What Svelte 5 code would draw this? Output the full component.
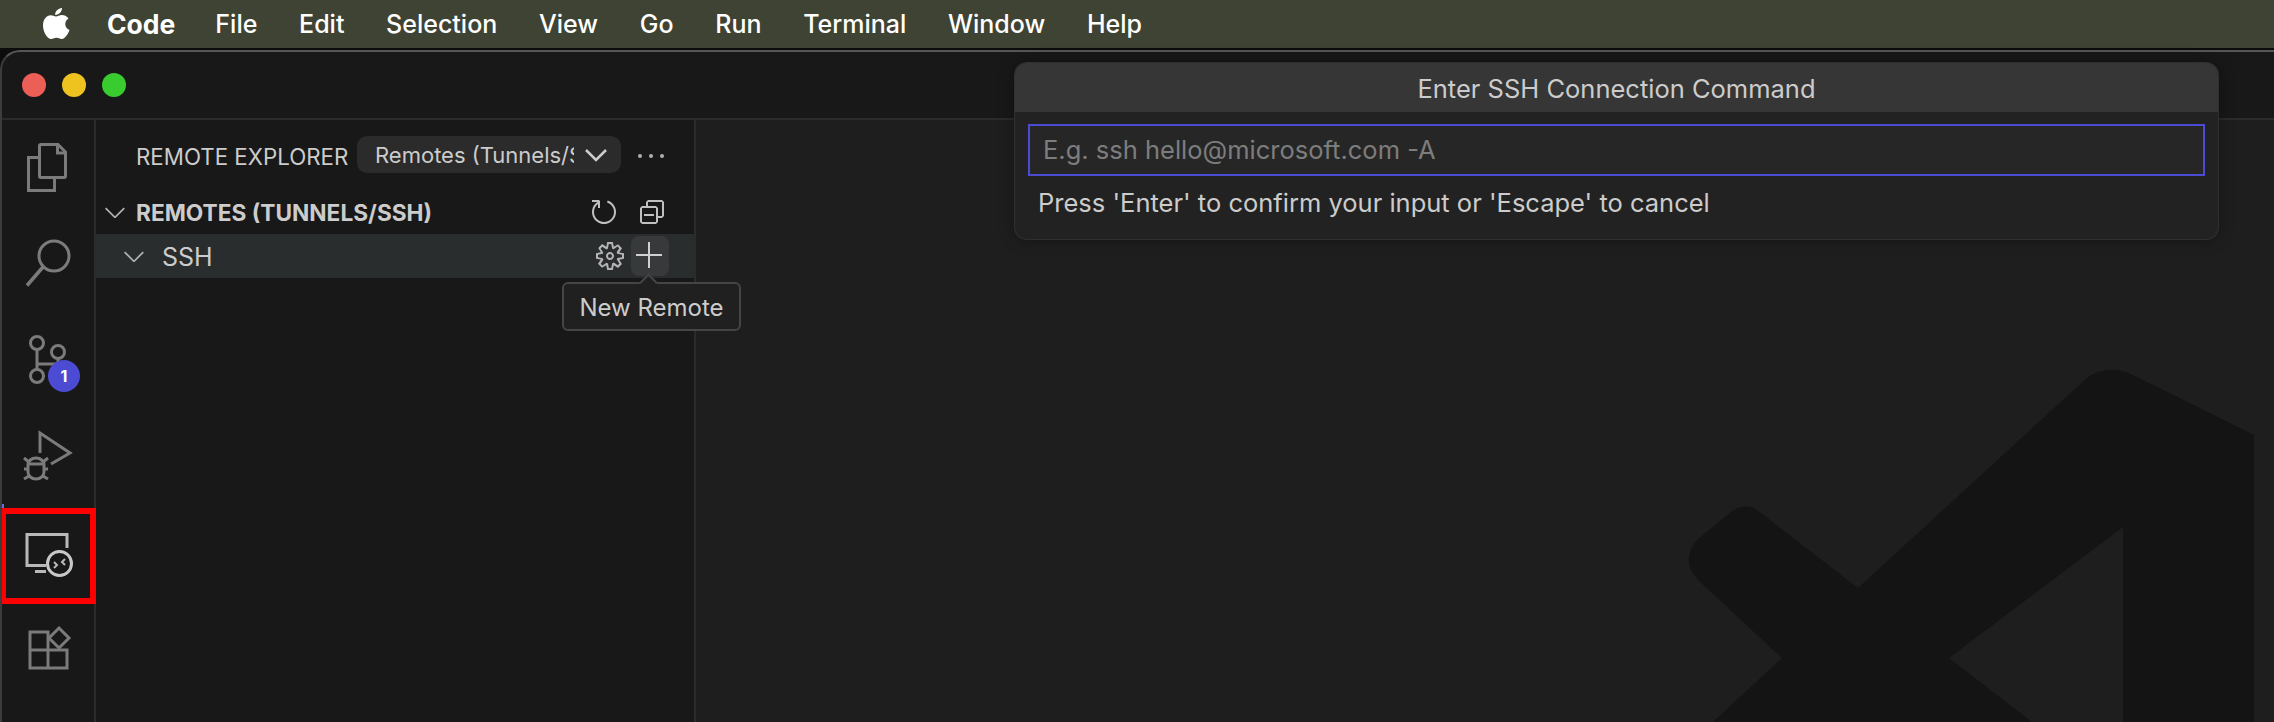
<script>
  const menus = ['File', 'Edit', 'Selection', 'View', 'Go', 'Run', 'Terminal', 'Window', 'Help'];
  const chevronDown = 'M7.976 10.072l4.357-4.357.62.618L8.284 11h-.618L3 6.333l.619-.618 4.357 4.357z';
</script>

<div class="page">
  <div class="menubar">
    <svg class="apple" width="30" height="34" viewBox="0 0 30 34">
      <path d="M21 1c.3 3-2.700 7-6.800 7-.4-3.600 3-6.700 6.800-7zM15 9.500c1.500 0 3.300-1.500 6-1.500 2 0 5 1 6.500 3.600-4.800 3-4 9.500 1 11.400-1.300 3.500-4.500 9-7.500 9-2 0-2.900-1.300-5.500-1.300S12 32 10 32C6.500 32 2 25 2 18.500 2 12 6 8.300 9.500 8.300c2.300 0 4 1.200 5.500 1.200z" fill="#fff"/>
    </svg>
    <span class="app-name">Code</span>
    {#each menus as item}
      <span class="menu-item">{item}</span>
    {/each}
  </div>

  <div class="window">
    <div class="titlebar">
      <span class="light red"></span>
      <span class="light yellow"></span>
      <span class="light green"></span>
    </div>

    <div class="main">
      <div class="activitybar">
        <div class="activity-item">
          <svg width="94" height="96" viewBox="0 0 94 96" fill="none" stroke="#7b7b7b" stroke-width="3">
            <path d="M38 37.500h-9.500v33h26v-12" />
            <path d="M39.500 26c0-1 .5-1.500 1.500-1.500h17l7.500 7.500v24c0 1-.5 1.500-1.500 1.500H41c-1 0-1.500-.5-1.500-1.500z" />
            <path d="M57.500 25v8h8" />
          </svg>
        </div>
        <div class="activity-item">
          <svg width="94" height="96" viewBox="0 0 94 96" fill="none" stroke="#7b7b7b" stroke-width="3">
            <circle cx="54" cy="40" r="15" />
            <path d="M43 51L27 69.500" stroke-width="3.500" />
          </svg>
        </div>
        <div class="activity-item">
          <svg width="94" height="96" viewBox="0 0 94 96" fill="none" stroke="#7b7b7b" stroke-width="3">
            <circle cx="37" cy="31" r="6.500" />
            <circle cx="58" cy="40" r="6.500" />
            <circle cx="37" cy="64" r="6.500" />
            <path d="M37 37.500v20M37 52h21v-5.500" />
          </svg>
          <span class="badge">1</span>
        </div>
        <div class="activity-item">
          <svg width="94" height="96" viewBox="0 0 94 96" fill="none" stroke="#7b7b7b" stroke-width="3">
            <path d="M40 45V25l30 20-19 11" />
            <path d="M28 57c0-4 3.500-7 8-7s8 3 8 7v7c0 4-3.500 7-8 7s-8-3-8-7z" />
            <path d="M29 56h14M24 50l5 4M48 50l-5 4M24 61h5M48 61h-5M24 71l5-3M48 71l-5-3" />
          </svg>
        </div>
        <div class="activity-item active">
          <svg width="94" height="96" viewBox="0 0 94 96" fill="none" stroke="#b9b9b9" stroke-width="3">
            <path d="M67 44V30.500H27v31h19M35 67.500h11" />
            <circle cx="59.500" cy="59.500" r="12" stroke="#c8c8c8" />
            <path d="M54 58l3 3-3 3M65 55l-3 3 3 3" stroke-width="2" />
          </svg>
          <span class="highlight"></span>
        </div>
        <div class="activity-item">
          <svg width="94" height="96" viewBox="0 0 94 96" fill="none" stroke="#7b7b7b" stroke-width="3">
            <path d="M30 32h18v36H30zM30 50h37v18H48" />
            <path d="M59 28l10 10-10 10-10-10z" />
          </svg>
        </div>
      </div>

      <div class="sidebar">
        <div class="sidebar-head">
          <span class="sidebar-title">REMOTE EXPLORER</span>
          <div class="select">
            <span class="select-label">Remotes (Tunnels/SSH)</span>
            <svg width="22" height="14" viewBox="0 0 22 14" fill="none" stroke="#cccccc" stroke-width="2.500">
              <path d="M1 2l10 10L21 2" />
            </svg>
          </div>
          <div class="more"><i></i><i></i><i></i></div>
        </div>

        <div class="section-row">
          <svg class="chevron" width="32" height="32" viewBox="0 0 16 16" fill="#b0b0b0">
            <path d={chevronDown} />
          </svg>
          <span class="section-title">REMOTES (TUNNELS/SSH)</span>
          <div class="row-actions">
            <svg width="32" height="32" viewBox="0 0 16 16" fill="#c0c0c0">
              <path fill-rule="evenodd" clip-rule="evenodd" d="M4.681 3H2V2h3.500l.5.500V6H5V4a5 5 0 1 0 4.530-.761l.302-.954A6 6 0 1 1 4.681 3z" />
            </svg>
            <svg width="32" height="32" viewBox="0 0 16 16" fill="#c0c0c0">
              <path d="M9 9H4v1h5V9z" />
              <path fill-rule="evenodd" clip-rule="evenodd" d="M5 3l1-1h7l1 1v7l-1 1h-2v2l-1 1H3l-1-1V6l1-1h2V3zm1 2h4l1 1v4h2V3H6v2zm4 1H3v7h7V6z" />
            </svg>
          </div>
        </div>

        <div class="ssh-row">
          <svg class="chevron" width="32" height="32" viewBox="0 0 16 16" fill="#b0b0b0">
            <path d={chevronDown} />
          </svg>
          <span class="ssh-label">SSH</span>
          <svg class="gear" width="32" height="32" viewBox="0 0 16 16" fill="#b4b4b4">
            <path fill-rule="evenodd" clip-rule="evenodd" d="M9.100 4.400L8.600 2H7.400l-.5 2.400-.7.300-2-1.300-.9.800 1.300 2-.2.700-2.400.5v1.200l2.400.5.300.8-1.300 2 .8.800 2-1.300.8.300.4 2.300h1.200l.5-2.400.8-.3 2 1.300.8-.8-1.300-2 .3-.8 2.300-.4V7.400l-2.400-.5-.3-.8 1.300-2-.8-.8-2 1.300-.7-.2zM9.400 1l.5 2.400L12 2.100l2 2-1.400 2.100 2.400.4v2.800l-2.400.5L14 12l-2 2-2.100-1.400-.5 2.400H6.600l-.5-2.400L4 13.900l-2-2 1.400-2.100L1 9.400V6.600l2.400-.5L2.100 4l2-2 2.100 1.400.4-2.400h2.800zm.6 7c0 1.100-.9 2-2 2s-2-.9-2-2 .9-2 2-2 2 .9 2 2zM8 9c.6 0 1-.4 1-1s-.4-1-1-1-1 .4-1 1 .4 1 1 1z" />
          </svg>
          <div class="plus-btn">
            <svg width="32" height="32" viewBox="0 0 16 16" fill="#d0d0d0">
              <path d="M14 7v1H8v6H7V8H1V7h6V1h1v6h6z" />
            </svg>
          </div>
          <div class="tooltip">New Remote</div>
        </div>
      </div>

      <div class="editor">
        <svg class="watermark" width="2274" height="722" viewBox="0 0 2274 722">
          <path d="M1856 588L2086 377Q2105 365 2127 373L2252 435V722H2121V527L1947 658L2030 722H1711L1780 658L1696 580Q1678 560 1695 540L1729 512Q1745 500 1759 513z" fill="#141414" />
        </svg>
      </div>
    </div>
  </div>

  <div class="quick-input">
    <div class="quick-title">Enter SSH Connection Command</div>
    <div class="quick-body">
      <div class="quick-field">E.g. ssh hello@microsoft.com -A</div>
      <div class="quick-hint">Press 'Enter' to confirm your input or 'Escape' to cancel</div>
    </div>
  </div>
</div>

<style>
  :global(body) {
    margin: 0;
    background: #0c0c0c;
    font-family: Inter, "Liberation Sans", sans-serif;
  }

  .page {
    position: relative;
    width: 2274px;
    height: 722px;
    overflow: hidden;
  }

  .menubar {
    display: flex;
    align-items: center;
    height: 48px;
    padding-left: 41px;
    background: #3f4334;
    color: #fff;
    font-size: 25px;
    font-weight: 500;
  }

  .apple {
    margin-right: 36px;
  }

  .app-name {
    font-size: 26.500px;
    font-weight: 700;
    margin-right: 40px;
  }

  .menu-item {
    margin-right: 41.700px;
  }

  .window {
    margin-top: 2px;
    height: 672px;
    background: #181818;
    border-top: 2px solid #565656;
    border-left: 2px solid #3c3c3c;
    border-top-left-radius: 20px;
    overflow: hidden;
    box-sizing: border-box;
  }

  .titlebar {
    display: flex;
    align-items: center;
    gap: 16px;
    height: 68px;
    padding-left: 20px;
    box-sizing: border-box;
    border-bottom: 2px solid #2b2b2b;
  }

  .light {
    width: 24px;
    height: 24px;
    border-radius: 50%;
  }

  .red {
    background: #ec5f57;
  }

  .yellow {
    background: #eec21f;
  }

  .green {
    background: #38cc2f;
  }

  .main {
    display: flex;
    height: 604px;
  }

  .activitybar {
    width: 94px;
    flex-shrink: 0;
    box-sizing: border-box;
    border-right: 2px solid #2b2b2b;
  }

  .activity-item {
    position: relative;
    height: 96px;
  }

  .activity-item svg {
    display: block;
    margin-left: -2px;
  }

  .activity-item.active::before {
    content: "";
    position: absolute;
    left: -2px;
    top: 0;
    width: 4px;
    height: 8px;
    background: #6a6ae0;
  }

  .highlight {
    position: absolute;
    left: -2px;
    top: 4px;
    width: 84px;
    height: 84px;
    border: 6px solid #ff0000;
  }

  .badge {
    position: absolute;
    left: 46px;
    top: 48px;
    width: 32px;
    height: 32px;
    border-radius: 50%;
    background: #4b4bd4;
    color: #fff;
    font-size: 16px;
    font-weight: 700;
    line-height: 32px;
    text-align: center;
  }

  .sidebar {
    width: 600px;
    flex-shrink: 0;
    box-sizing: border-box;
    border-right: 2px solid #2b2b2b;
    color: #cccccc;
  }

  .sidebar-head {
    display: flex;
    align-items: center;
    height: 72px;
    padding-left: 40px;
  }

  .sidebar-title {
    font-size: 22.300px;
    width: 221px;
    white-space: nowrap;
  }

  .select {
    display: flex;
    align-items: center;
    width: 264px;
    height: 37px;
    box-sizing: border-box;
    padding-left: 18px;
    background: #2b2b2b;
    border-radius: 10px;
    margin-bottom: 3px;
    font-size: 22px;
  }

  .select-label {
    width: 199px;
    overflow: hidden;
    white-space: nowrap;
    margin-right: 11px;
  }

  .more {
    display: flex;
    gap: 7px;
    margin-left: 17px;
  }

  .more i {
    width: 4px;
    height: 4px;
    background: #b0b0b0;
    border-radius: 50%;
  }

  .section-row {
    display: flex;
    align-items: center;
    height: 40px;
    margin-bottom: 2px;
    padding-left: 3px;
  }

  .chevron {
    flex-shrink: 0;
  }

  .section-title {
    margin-left: 5px;
    font-size: 22.700px;
    font-weight: 700;
    white-space: nowrap;
  }

  .row-actions {
    display: flex;
    gap: 16px;
    margin-left: auto;
    margin-right: 26px;
  }

  .ssh-row {
    position: relative;
    display: flex;
    align-items: center;
    height: 44px;
    padding-left: 22px;
    background: #2a2d2e;
  }

  .ssh-label {
    margin-left: 12px;
    margin-top: 2px;
    font-size: 25px;
  }

  .gear {
    margin-left: auto;
    margin-right: 5px;
  }

  .plus-btn {
    display: flex;
    align-items: center;
    justify-content: center;
    width: 38px;
    height: 40px;
    margin-right: 25px;
    border-radius: 8px;
    background: #37393b;
  }

  .tooltip {
    position: absolute;
    z-index: 2;
    left: 466px;
    top: 48px;
    width: 179px;
    height: 49px;
    box-sizing: border-box;
    border: 2px solid #454545;
    border-radius: 6px;
    background: #202020;
    font-size: 24px;
    line-height: 47px;
    text-align: center;
    white-space: nowrap;
  }

  .tooltip::before {
    content: "";
    position: absolute;
    left: 78px;
    top: -8px;
    width: 11px;
    height: 11px;
    background: #202020;
    border-top: 2px solid #454545;
    border-left: 2px solid #454545;
    transform: rotate(45deg);
  }

  .editor {
    position: relative;
    flex: 1;
    background: #1e1e1e;
    overflow: hidden;
  }

  .watermark {
    position: absolute;
    left: -694px;
    top: -120px;
  }

  .quick-input {
    position: absolute;
    left: 1015px;
    top: 63px;
    width: 1203px;
    height: 176px;
    box-sizing: border-box;
    background: #222222;
    border-radius: 12px;
    overflow: hidden;
    color: #cccccc;
    box-shadow: 0 0 0 1px #303030, 0 0 16px rgba(0, 0, 0, 0.4);
  }

  .quick-title {
    height: 49px;
    background: #363636;
    font-size: 25.500px;
    line-height: 52px;
    text-align: center;
  }

  .quick-body {
    padding: 12px 13px 0;
  }

  .quick-field {
    height: 52px;
    box-sizing: border-box;
    padding-left: 13px;
    border: 2px solid #4b4bd4;
    background: #262626;
    color: #7d7d7d;
    font-size: 25.500px;
    line-height: 48px;
  }

  .quick-hint {
    margin-top: 13px;
    padding-left: 10px;
    font-size: 25.500px;
    line-height: 28px;
  }
</style>
